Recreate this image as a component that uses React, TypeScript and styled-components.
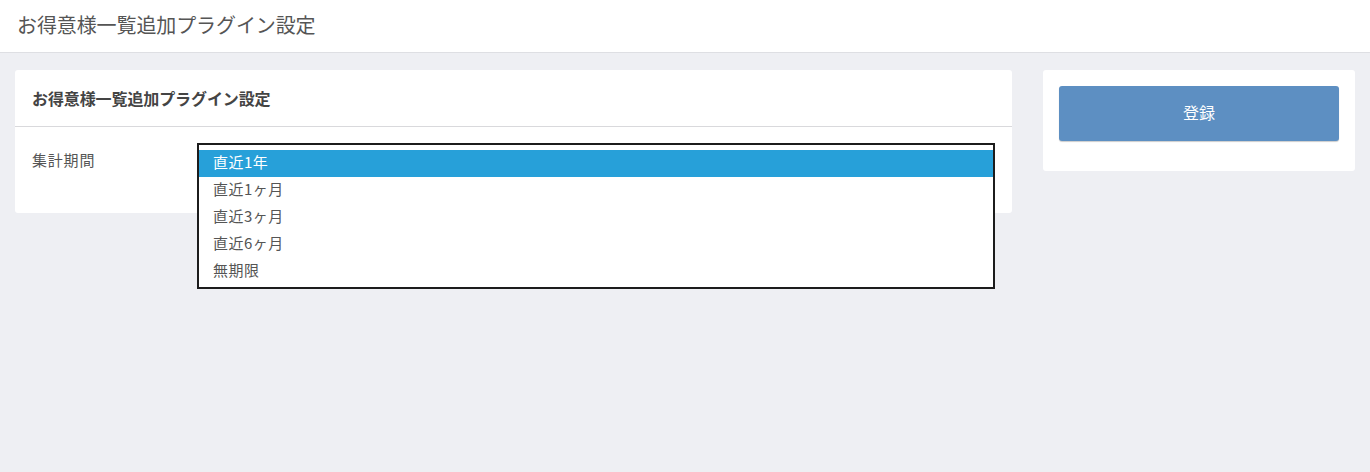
import React, { useState } from 'react';
import styled, { createGlobalStyle } from 'styled-components';

const GlobalStyle = createGlobalStyle`
  html, body {
    margin: 0;
    padding: 0;
    background-color: #eeeff3;
    font-family: 'Noto Sans CJK JP', 'Noto Sans', sans-serif;
    color: #555;
  }
`;

const periods = ['直近1年', '直近1ヶ月', '直近3ヶ月', '直近6ヶ月', '無期限'];

const App = () => {
  const [selected, setSelected] = useState<number>(0);

  return (
    <Page>
      <GlobalStyle />
      <Header>
        <HeaderTitle>お得意様一覧追加プラグイン設定</HeaderTitle>
      </Header>
      <Main>
        <Card>
          <CardHeader>お得意様一覧追加プラグイン設定</CardHeader>
          <CardBody>
            <Label>集計期間</Label>
            <SelectWrap>
              <ListBox>
                {periods.map((p, i) => (
                  <Option key={p} active={i === selected} onClick={() => setSelected(i)}>
                    {p}
                  </Option>
                ))}
              </ListBox>
            </SelectWrap>
          </CardBody>
        </Card>
        <SideCard>
          <SubmitButton>登録</SubmitButton>
        </SideCard>
      </Main>
    </Page>
  );
};

const Page = styled.div`
  min-height: 100vh;
  background-color: #eeeff3;
`;

const Header = styled.div`
  height: 52px;
  display: flex;
  align-items: center;
  padding: 0 17px;
  background-color: #fff;
  border-bottom: 1px solid #dedfe3;
`;

const HeaderTitle = styled.div`
  font-size: 20px;
  letter-spacing: -0.1px;
  color: #555;
  margin-top: -3px;
`;

const Main = styled.div`
  display: flex;
  align-items: flex-start;
  gap: 31px;
  padding: 17px 15px;
`;

const Card = styled.div`
  flex: 1;
  background-color: #fff;
  border-radius: 3px;
`;

const CardHeader = styled.div`
  height: 56px;
  display: flex;
  align-items: center;
  padding: 0 17px;
  border-bottom: 1px solid #d9d9dc;
  font-size: 16px;
  font-weight: bold;
  color: #444;
  letter-spacing: -0.1px;
`;

const CardBody = styled.div`
  display: flex;
  height: 86px;
  padding: 16px 17px 0 17px;
  box-sizing: border-box;
`;

const Label = styled.div`
  width: 166px;
  font-size: 15px;
  line-height: 34px;
  color: #555;
  letter-spacing: 0.8px;
`;

const SelectWrap = styled.div`
  position: relative;
  flex: 1;
  margin-left: -1px;
`;

const ListBox = styled.div`
  position: absolute;
  top: 0;
  left: 0;
  right: 0;
  z-index: 10;
  border: 2px solid #1c1c1c;
  background-color: #fff;
  padding: 5px 0 2px;
`;

const Option = styled.div<{ active: boolean }>`
  height: 27px;
  line-height: 23px;
  box-sizing: border-box;
  padding: 0 14px 4px;
  font-size: 15px;
  letter-spacing: 0.5px;
  cursor: default;
  color: ${(p) => (p.active ? '#fff' : '#555')};
  background-color: ${(p) => (p.active ? '#27a0d9' : '#fff')};
`;

const SideCard = styled.div`
  width: 312px;
  height: 101px;
  padding: 16px;
  box-sizing: border-box;
  background-color: #fff;
  border-radius: 3px;
`;

const SubmitButton = styled.button`
  width: 100%;
  height: 55px;
  padding-bottom: 4px;
  border: none;
  border-radius: 3px;
  background-color: #5d8fc2;
  box-shadow: 0 1px 1px rgba(0, 0, 0, 0.2);
  color: #fff;
  font-family: inherit;
  font-size: 16px;
  cursor: pointer;
`;

export default App;
